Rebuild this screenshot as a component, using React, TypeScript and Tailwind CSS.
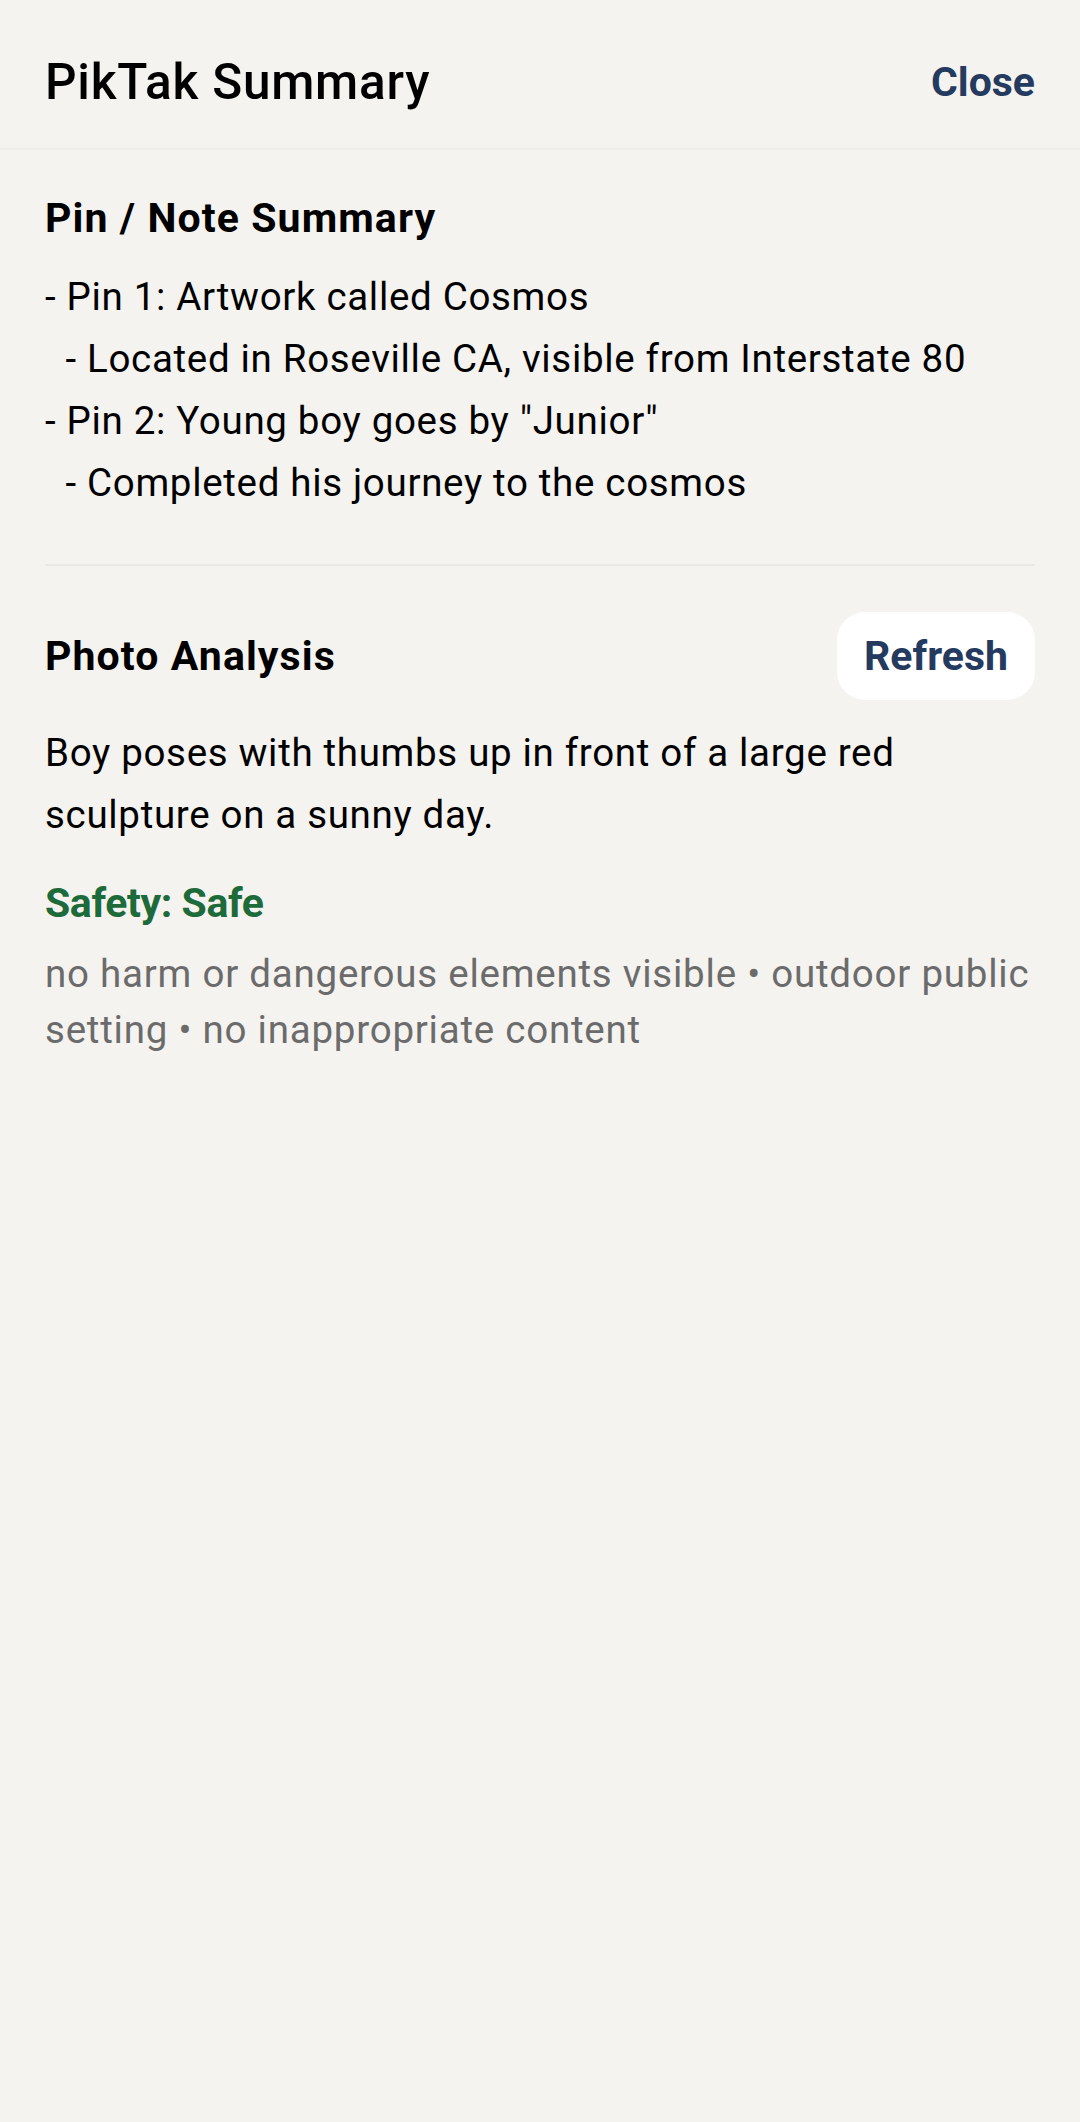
import React from "react";

const pins = [
  "- Pin 1: Artwork called Cosmos",
  "  - Located in Roseville CA, visible from Interstate 80",
  '- Pin 2: Young boy goes by "Junior"',
  "  - Completed his journey to the cosmos",
];

export default function App() {
  return (
    <div className="min-h-screen bg-[#f5f3ef] font-[Roboto,sans-serif] text-black">
      {/* Top bar */}
      <header className="flex h-[150px] items-center justify-between border-b-2 border-[#eeece8] px-[45px] pt-[17px]">
        <h1 className="text-[49.5px] font-medium leading-none tracking-[0.77px]">PikTak Summary</h1>
        <button className="text-[41px] font-bold leading-none text-[#243a5e]">Close</button>
      </header>

      <main className="px-[45px]">
        {/* Pins / notes */}
        <section className="border-b-2 border-[#ebe9e4] pb-[50px]">
          <h2 className="mt-[43px] text-[41px] font-bold leading-[50px] tracking-[1.1px]">Pin / Note Summary</h2>
          <div className="mt-[23px] whitespace-pre-wrap text-[38.5px] leading-[62px] tracking-[0.68px]">
            {pins.map((line) => (
              <p key={line}>{line}</p>
            ))}
          </div>
        </section>

        {/* Photo analysis */}
        <section className="pt-[46px]">
          <div className="flex items-center justify-between">
            <h2 className="text-[41px] font-bold leading-[50px] tracking-[1.1px]">Photo Analysis</h2>
            <button className="h-[88px] w-[198px] rounded-[28px] bg-white text-[41px] font-bold leading-none text-[#243a5e]">
              Refresh
            </button>
          </div>
          <p className="mt-[22px] text-[38.5px] leading-[62px] tracking-[0.68px]">
            Boy poses with thumbs up in front of a large red sculpture on a sunny day.
          </p>
          <p className="mt-[32px] text-[41px] font-bold leading-[50px] tracking-[-0.4px] text-[#1d6a3a]">Safety: Safe</p>
          <p className="mt-[18px] text-[38.5px] leading-[56px] tracking-[0.77px] text-[#6b6b6b]">
            no harm or dangerous elements visible • outdoor public setting • no inappropriate content
          </p>
        </section>
      </main>
    </div>
  );
}
